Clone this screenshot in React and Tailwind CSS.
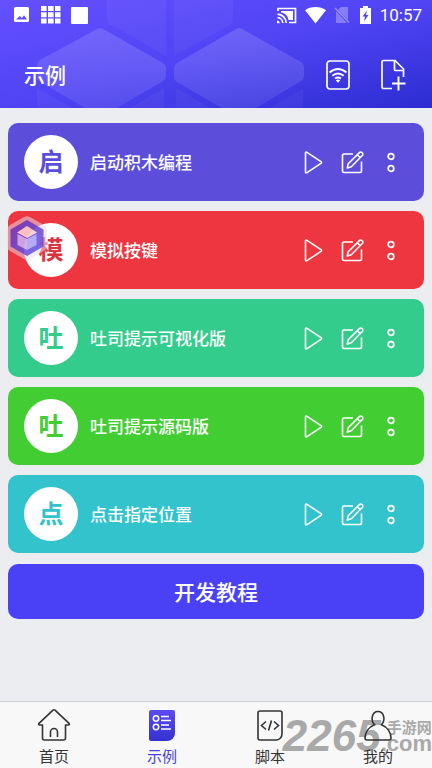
import { useState } from "react";
import { clsx } from "clsx";

const EXAMPLES = [
  { id: "blocks", badge: "启", title: "启动积木编程", bg: "bg-[#5c4edb]", text: "text-[#5c4edb]" },
  { id: "keys", badge: "模", title: "模拟按键", bg: "bg-[#ee3640]", text: "text-[#dd333d]" },
  { id: "toast-visual", badge: "吐", title: "吐司提示可视化版", bg: "bg-[#33cc8c]", text: "text-[#33cc8c]" },
  { id: "toast-source", badge: "吐", title: "吐司提示源码版", bg: "bg-[#42ce32]", text: "text-[#42ce32]" },
  { id: "tap", badge: "点", title: "点击指定位置", bg: "bg-[#32c3cc]", text: "text-[#32c3cc]" },
];

const TABS = [
  { id: "home", label: "首页", icon: HomeIcon },
  { id: "examples", label: "示例", icon: ExamplesIcon },
  { id: "scripts", label: "脚本", icon: ScriptIcon },
  { id: "mine", label: "我的", icon: UserIcon },
];

export default function App() {
  const [activeTab, setActiveTab] = useState("examples");

  return (
    <div className="flex min-h-screen flex-col bg-[#ebedf1] font-['Roboto','Noto_Sans_CJK_SC',sans-serif]">
      <Header />

      <main className="relative flex flex-1 flex-col px-2 pt-[15px]">
        <ul className="flex flex-col gap-[10px]">
          {EXAMPLES.map((example) => (
            <ExampleRow key={example.id} example={example} />
          ))}
        </ul>
        <button
          type="button"
          className="mt-[11px] h-[55px] rounded-[10px] bg-[#4a41f7] pt-1 text-[21px] font-medium text-white"
        >
          开发教程
        </button>
        <FloatingLogo />
      </main>

      <nav className="relative flex h-[67px] border-t border-[#d0d1d6] bg-[#f8f8f8]">
        <Watermark />
        {TABS.map(({ id, label, icon: Icon }) => (
          <button
            key={id}
            type="button"
            onClick={() => setActiveTab(id)}
            className={clsx(
              "relative flex flex-1 flex-col items-center gap-[5px] pt-[6px] text-[15px] leading-[21px]",
              id === activeTab ? "text-[#4a3fe0]" : "text-[#333333]"
            )}
          >
            <Icon />
            {label}
          </button>
        ))}
      </nav>
    </div>
  );
}

function Header() {
  return (
    <header className="relative h-[108px] overflow-hidden bg-linear-to-br from-[#6450ff] via-[#5044f4] to-[#2c2cd2] text-white">
      <HeaderPattern />
      <div className="relative flex h-[30px] items-center justify-between pr-[10px] pl-[13px]">
        <div className="flex items-center gap-[10px]">
          <svg width="18" height="18" viewBox="0 0 18 18" aria-hidden="true">
            <path
              fill="currentColor"
              fillRule="evenodd"
              d="M2.500 1h12a1.500 1.500 0 0 1 1.500 1.500v12a1.500 1.500 0 0 1-1.500 1.500h-12A1.500 1.500 0 0 1 1 14.500v-12A1.500 1.500 0 0 1 2.500 1ZM3 13.500h11L11 9.200l-2 2.700-2.200-1.800Z"
            />
          </svg>
          <svg width="20" height="20" viewBox="0 0 20 20" fill="currentColor" aria-hidden="true">
            <path d="M0 1h5.600v5H0zM7 1h5.600v5H7zM14 1h5.500v5H14zM0 7.300h5.600v5H0zM7 7.300h5.600v5H7zM14 7.300h5.500v5H14zM0 13.600h5.600v5H0zM7 13.600h5.600v5H7zM14 13.600h5.500v5H14z" />
          </svg>
          <span className="size-[17px] rounded-[1px] bg-white" />
        </div>
        <div className="flex items-center gap-2">
          <CastIcon />
          <svg width="21" height="18" viewBox="0 0 21 18" fill="currentColor" aria-hidden="true">
            <path d="M10.500 17.500 0 4.200Q4.500 1 10.500 1T21 4.200Z" />
          </svg>
          <svg width="17" height="18" viewBox="0 0 17 18" aria-hidden="true">
            <path fill="#fff" fillOpacity=".3" d="M7 1h7v13L4 4ZM2 5l11 12H2Z" />
            <path stroke="#fff" strokeOpacity=".4" strokeWidth="1.300" d="m1 2 14 14.500" />
          </svg>
          <svg width="13" height="18" viewBox="0 0 13 18" aria-hidden="true">
            <path
              fill="currentColor"
              fillRule="evenodd"
              d="M4 0h5v2h3v16H1V2h3ZM8 4.500 3.500 10.500H6L5 15.500 9.500 9H7Z"
            />
          </svg>
          <time className="text-[17px] leading-5">10:57</time>
        </div>
      </div>
      <div className="relative flex h-[90px] items-center justify-between pr-[26px] pl-6">
        <h1 className="pt-1 text-[21px] font-medium">示例</h1>
        <div className="flex gap-[30px]">
          <button type="button" aria-label="无线连接">
            <DeviceWifiIcon />
          </button>
          <button type="button" aria-label="新建">
            <NewFileIcon />
          </button>
        </div>
      </div>
    </header>
  );
}

function ExampleRow({ example }) {
  return (
    <li
      className={clsx(
        "flex h-[78px] items-center rounded-[10px] pr-6 pl-4 text-white",
        example.bg
      )}
    >
      <span
        className={clsx(
          "flex size-[54px] shrink-0 items-center justify-center rounded-full bg-white pt-[2px] text-[25px] font-bold",
          example.text
        )}
      >
        {example.badge}
      </span>
      <h2 className="ml-3 flex-1 pt-1 text-[17px] font-medium">{example.title}</h2>
      <div className="flex items-center gap-4">
        <button type="button" aria-label="运行">
          <PlayIcon />
        </button>
        <button type="button" aria-label="编辑">
          <EditIcon />
        </button>
        <button type="button" aria-label="更多">
          <MoreIcon />
        </button>
      </div>
    </li>
  );
}

// Faint hexagons behind the header
function HeaderPattern() {
  return (
    <svg
      className="absolute inset-0"
      width="432"
      height="108"
      viewBox="0 0 432 108"
      fill="#fff"
      aria-hidden="true"
    >
      <defs>
        <linearGradient id="hexFade" x1="0" y1="0" x2="0" y2="1">
          <stop offset="0" stopColor="#fff" stopOpacity=".15" />
          <stop offset="1" stopColor="#fff" stopOpacity=".08" />
        </linearGradient>
      </defs>
      <g fill="url(#hexFade)">
        <path d="M97 29Q100 27 103 29L163 63Q166 65 166 68V76Q166 79 163 81L117 108H85L37 80V65Q37 62 40 60Z" />
        <path d="M236 29Q239 27 242 29L301 62Q304 64 304 67V76Q304 79 301 81L256 108H222L177 82Q174 80 174 77V68Q174 65 177 63Z" />
      </g>
      <g fillOpacity=".04">
        <path d="M107 0H166V56L110 24Q107 22 107 19Z" />
        <path d="M174 0H233V20Q233 23 230 25L174 56Z" />
        <path d="M37 88 72 108H37Z" />
        <path d="M164 88V108H130Z" />
        <path d="M176 88 210 108H176Z" />
        <path d="M303 89V108H269Z" />
      </g>
    </svg>
  );
}

function CastIcon() {
  return (
    <svg width="20" height="17" viewBox="0 0 20 17" fill="none" stroke="currentColor" aria-hidden="true">
      <path strokeWidth="1.700" d="M1 4V1.500h17.500v14H12" />
      <path fill="currentColor" stroke="none" d="M4 4h12v9h-4.500C11 9 8 6 4 5.500Z" />
      <path strokeWidth="1.700" d="M.500 7.200A9 9 0 0 1 9.300 16M.500 10.700A5.500 5.500 0 0 1 5.800 16" />
      <path fill="currentColor" stroke="none" d="M0 13.500A3 3 0 0 1 2.800 16.300H0Z" />
    </svg>
  );
}

function DeviceWifiIcon() {
  return (
    <svg width="24" height="30" viewBox="0 0 24 30" fill="none" stroke="currentColor" strokeWidth="1.700" aria-hidden="true">
      <rect x="1" y="1" width="22" height="28" rx="3" />
      <path strokeWidth="1.900" d="M3.500 12.500q8.500-7 17 0M6.300 15.700q5.700-4.600 11.400 0M9 18.600q3-2.400 6 0" />
      <path fill="currentColor" stroke="none" d="M9.800 20.300q2.200-1.500 4.400 0L12 22.800Z" />
    </svg>
  );
}

function NewFileIcon() {
  return (
    <svg width="26" height="32" viewBox="0 0 26 32" fill="none" stroke="currentColor" strokeWidth="1.700" aria-hidden="true">
      <path d="M12 29.500H3.500a1.500 1.500 0 0 1-1.500-1.500V3a1.500 1.500 0 0 1 1.500-1.500H15L23.500 10v8" />
      <path d="M14.500 2v8.500a1 1 0 0 0 1 1h8" />
      <path strokeWidth="1.900" d="M18.500 17.500V31.500M12 24.500h13.500" />
    </svg>
  );
}

function PlayIcon() {
  return (
    <svg width="20" height="24" viewBox="0 0 20 24" fill="none" stroke="currentColor" strokeWidth="1.600" strokeLinejoin="round" aria-hidden="true">
      <path d="M1.500 3.100v18.800q0 1.600 1.500.700l14-9.200q1.200-.900 0-1.800l-14-9.200q-1.500-.900-1.500.700Z" />
    </svg>
  );
}

function EditIcon() {
  return (
    <svg width="24" height="24" viewBox="0 0 24 24" fill="none" stroke="currentColor" strokeWidth="1.600" strokeLinejoin="round" aria-hidden="true">
      <path d="M13 4H4a1.500 1.500 0 0 0-1.500 1.500V21A1.500 1.500 0 0 0 4 22.500h16a1.500 1.500 0 0 0 1.500-1.500v-9.500" />
      <path d="M7.300 18l.900-4.300L19.400 2.600a1.900 1.900 0 0 1 2.700 0l.200.200a1.900 1.900 0 0 1 0 2.700L11.300 16.700ZM17.300 4.700l3 3" />
    </svg>
  );
}

function MoreIcon() {
  return (
    <svg width="20" height="24" viewBox="0 0 20 24" fill="none" stroke="currentColor" strokeWidth="1.700" aria-hidden="true">
      <circle cx="11" cy="6.500" r="2.800" />
      <circle cx="11" cy="18.500" r="2.800" />
    </svg>
  );
}

function FloatingLogo() {
  return (
    <button type="button" aria-label="悬浮窗" className="absolute top-[107px] left-1 opacity-90">
      <svg width="46" height="46" viewBox="0 0 46 46" aria-hidden="true">
        <defs>
          <linearGradient id="logoFill" x1="0" y1="0" x2="1" y2="1">
            <stop offset="0" stopColor="#7038b8" />
            <stop offset="1" stopColor="#6c60ec" />
          </linearGradient>
        </defs>
        <path fill="#e9dcea" fillOpacity=".6" d="M20 2q3-1.500 6 0l14 8q3 2 3 5v16q0 3-3 5l-14 8q-3 1.500-6 0L6 36q-3-2-3-5V15q0-3 3-5Z" />
        <path fill="url(#logoFill)" d="M23 5 39.500 14.500v17L23 41 6.500 31.500v-17Z" />
        <path fill="#ffd0d0" d="m23 11 10 6.500-10 5.500-10-5.500Z" />
        <path fill="#cbaef0" d="m13.500 19 9.500 5v11l-9.500-5Z" />
        <path fill="#b0a2f6" d="m32.500 19-9.500 5v11l9.500-5Z" />
      </svg>
    </button>
  );
}

function HomeIcon() {
  return (
    <svg className="shrink-0" width="34" height="34" viewBox="0 0 34 34" fill="none" stroke="currentColor" strokeWidth="1.600" strokeLinejoin="round" aria-hidden="true">
      <path d="M5.500 17v13a2 2 0 0 0 2 2h19a2 2 0 0 0 2-2V17h3q1.500-.500.500-1.700L18 2.200q-1-.800-2 0L2 15.300Q1 16.500 2.500 17Z" />
      <path d="M13.500 29v-5a3.500 3.500 0 0 1 7 0v5" />
    </svg>
  );
}

function ExamplesIcon() {
  return (
    <svg className="shrink-0" width="34" height="34" viewBox="0 0 34 34" aria-hidden="true">
      <defs>
        <linearGradient id="examplesFill" x1="0" y1="0" x2="0" y2="1">
          <stop offset="0" stopColor="#5b4bf0" />
          <stop offset="1" stopColor="#3430d0" />
        </linearGradient>
      </defs>
      <path fill="url(#examplesFill)" d="M6 2h22a2 2 0 0 1 2 2v21a8 8 0 0 1-8 8H6a2 2 0 0 1-2-2V4a2 2 0 0 1 2-2Z" />
      <g fill="none" stroke="#fff" strokeWidth="1.500">
        <circle cx="11" cy="10.500" r="2.700" />
        <circle cx="11" cy="19" r="2.700" />
        <path d="M16 8.500h8M16 12.500h10M16 17h8M16 21h10" />
      </g>
    </svg>
  );
}

function ScriptIcon() {
  return (
    <svg className="shrink-0" width="34" height="34" viewBox="0 0 34 34" fill="none" stroke="currentColor" strokeWidth="1.600" aria-hidden="true">
      <path d="M7 3h20a2 2 0 0 1 2 2v21a6 6 0 0 1-6 6H7a2 2 0 0 1-2-2V5a2 2 0 0 1 2-2Z" />
      <path d="m13 13.500-4.500 4 4.500 4M21 13.500l4.500 4-4.500 4M18.500 12.500l-3 10" />
    </svg>
  );
}

function UserIcon() {
  return (
    <svg className="shrink-0" width="34" height="34" viewBox="0 0 34 34" fill="none" stroke="currentColor" strokeWidth="1.600" aria-hidden="true">
      <path d="M13.500 16.700C9.500 13 10.500 3.500 17 3.500s7.500 9.500 3.500 13.200C26.500 19 30 24.500 30 30q0 2-2 2H6q-2 0-2-2c0-5.500 3.500-11 9.500-13.300Z" />
    </svg>
  );
}

function Watermark() {
  return (
    <div
      className="pointer-events-none absolute right-0 bottom-[10px] flex items-end font-['Liberation_Sans','Noto_Sans_CJK_SC',sans-serif] font-bold text-[#808080] opacity-65"
      aria-hidden="true"
    >
      <span className="text-[44px] leading-[44px] italic">2265</span>
      <span className="flex flex-col pb-[6px]">
        <span className="pl-[6px] text-[15px] leading-4">手游网</span>
        <span className="text-[22px] leading-4">.com</span>
      </span>
    </div>
  );
}
